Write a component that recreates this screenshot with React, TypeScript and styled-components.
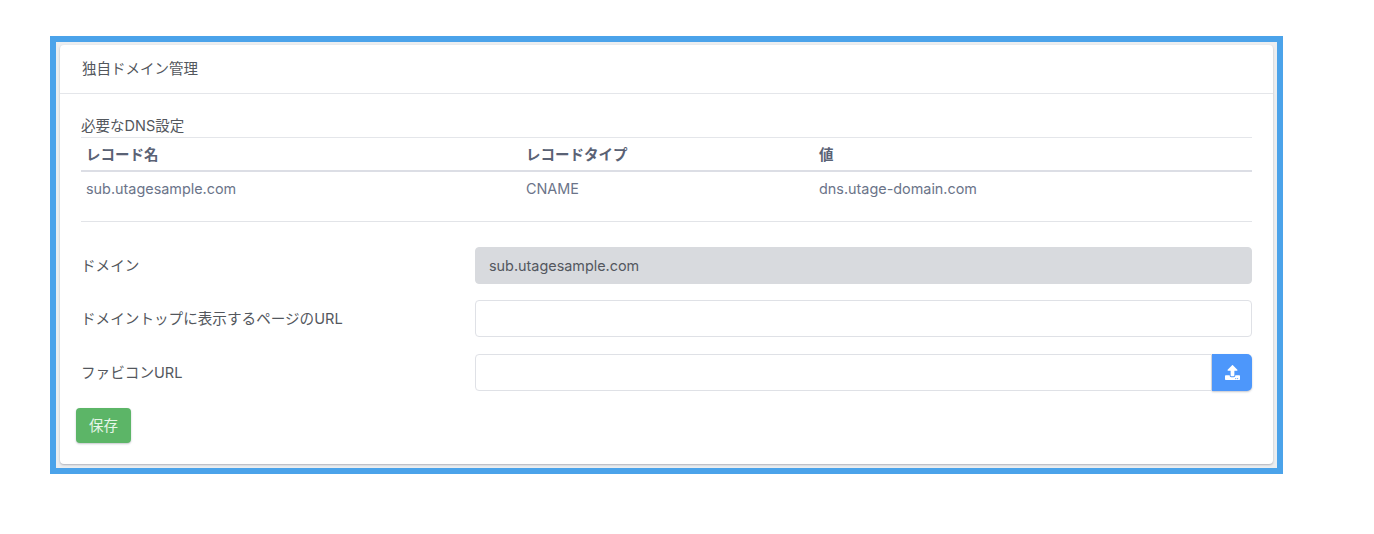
import React from 'react';
import styled, { createGlobalStyle } from 'styled-components';
import { FaUpload } from 'react-icons/fa';

const Global = createGlobalStyle`
  html, body { margin: 0; padding: 0; background: #fff; }
  body { font-family: Inter, "Noto Sans CJK JP", sans-serif; font-size: 14px; color: #4a4e54; }
  * { box-sizing: border-box; }
`;
const Page = styled.div`
  padding: 36px 0 0 50px;
`;
const Frame = styled.div`
  width: 1233px;
  height: 438px;
  border: 6px solid #4ba3ea;
  background: #eceef0;
  padding: 3px 4px 4px;
`;
const Card = styled.section`
  height: 419px;
  background: #fff;
  border-radius: 4px;
  box-shadow: 0 1px 2px rgba(60, 66, 87, 0.35);
`;
const CardHeader = styled.header`
  height: 49px;
  padding: 0 22px 3px;
  display: flex;
  align-items: center;
  border-bottom: 1px solid #e4e6ea;
  font-size: 14.5px;
  color: #53575d;
`;
const CardBody = styled.div`
  padding: 24px 21px 0 21px;
`;
const Caption = styled.div`
  height: 19px;
  line-height: 15px;
  font-size: 14.5px;
  color: #53575d;
`;
const Table = styled.table`
  width: 100%;
  table-layout: fixed;
  border-collapse: collapse;
`;
const Th = styled.th<{ $w?: number }>`
  width: ${p => (p.$w ? `${p.$w}px` : 'auto')};
  height: 33px;
  padding: 0 5px 1px;
  text-align: left;
  font-size: 14.5px;
  font-weight: 700;
  color: #5a6275;
  border-top: 1px solid #e4e6ea;
  border-bottom: 2px solid #dcdee5;
`;
const Td = styled.td`
  height: 35px;
  padding: 0 5px;
  font-size: 14.4px;
  color: #6b7489;
`;
const Divider = styled.hr`
  margin: 15px 0 25px;
  border: 0;
  border-top: 1px solid #e2e4e8;
`;
const FormRow = styled.div`
  display: grid;
  grid-template-columns: 394px 1fr;
  align-items: center;
  margin-bottom: 16.75px;
`;
const Label = styled.label`
  font-size: 14.6px;
  color: #53575d;
  padding-bottom: 2px;
`;
const Field = styled.div`
  display: flex;
  height: 37px;
`;
const Input = styled.input`
  flex: 1;
  min-width: 0;
  height: 37px;
  padding: 0 13px;
  font: inherit;
  font-size: 14.4px;
  color: #53575e;
  background: ${p => (p.disabled ? '#d8dade' : '#fff')};
  border: 1px solid ${p => (p.disabled ? '#d8dade' : '#dfe1e6')};
  border-radius: 4px;
  outline: none;
  opacity: 1;
`;
const JoinedInput = styled(Input)`
  border-radius: 4px 0 0 4px;
`;
const UploadButton = styled.button`
  width: 40px;
  height: 37px;
  padding: 0;
  border: 0;
  border-radius: 0 5px 5px 0;
  background: #4d97fb;
  color: #fff;
  box-shadow: 0 1px 2px rgba(60, 66, 87, 0.3);
  display: flex;
  align-items: center;
  justify-content: center;
`;
const SaveButton = styled.button`
  display: block;
  width: 55px;
  height: 35px;
  margin: 0 0 0 -5px;
  padding: 0 0 2px;
  border: 0;
  border-radius: 4px;
  background: #5cb567;
  color: #e6f5e8;
  font: inherit;
  font-size: 14.5px;
  box-shadow: 0 1px 2px rgba(60, 66, 87, 0.3);
`;

export default function App() {
  return (
    <Page>
      <Global />
      <Frame>
        <Card>
          <CardHeader>独自ドメイン管理</CardHeader>
          <CardBody>
            <Caption>必要なDNS設定</Caption>
            <Table>
              <thead>
                <tr>
                  <Th $w={440}>レコード名</Th>
                  <Th $w={293}>レコードタイプ</Th>
                  <Th>値</Th>
                </tr>
              </thead>
              <tbody>
                <tr>
                  <Td>sub.utagesample.com</Td>
                  <Td>CNAME</Td>
                  <Td>dns.utage-domain.com</Td>
                </tr>
              </tbody>
            </Table>
            <Divider />
            <FormRow>
              <Label>ドメイン</Label>
              <Field><Input disabled value="sub.utagesample.com" readOnly /></Field>
            </FormRow>
            <FormRow>
              <Label>ドメイントップに表示するページのURL</Label>
              <Field><Input /></Field>
            </FormRow>
            <FormRow>
              <Label>ファビコンURL</Label>
              <Field>
                <JoinedInput />
                <UploadButton aria-label="アップロード"><FaUpload size={15} /></UploadButton>
              </Field>
            </FormRow>
            <SaveButton>保存</SaveButton>
          </CardBody>
        </Card>
      </Frame>
    </Page>
  );
}
